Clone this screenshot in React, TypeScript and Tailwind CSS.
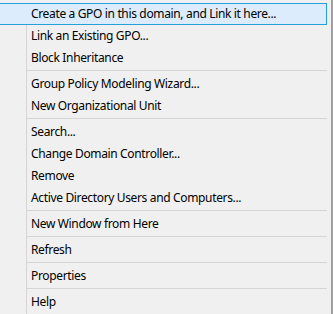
import React from "react";

type Entry = { label: string; active?: boolean } | "sep";

const entries: Entry[] = [
  { label: "Create a GPO in this domain, and Link it here...", active: true },
  { label: "Link an Existing GPO..." },
  { label: "Block Inheritance" },
  "sep",
  { label: "Group Policy Modeling Wizard..." },
  { label: "New Organizational Unit" },
  "sep",
  { label: "Search..." },
  { label: "Change Domain Controller..." },
  { label: "Remove" },
  { label: "Active Directory Users and Computers..." },
  "sep",
  { label: "New Window from Here" },
  "sep",
  { label: "Refresh" },
  "sep",
  { label: "Properties" },
  "sep",
  { label: "Help" },
];

export default function App() {
  return (
    <div className="w-[333px] h-[314px] overflow-hidden bg-[#f0f0f0] flex font-['Noto_Sans','Liberation_Sans',sans-serif] text-[12px] tracking-[-0.35px] text-black">
      <div className="w-[327px] pt-[3px] flex flex-col">
        {entries.map((e, i) =>
          e === "sep" ? (
            <div key={i} className="flex h-[4px] shrink-0">
              <div className="w-[26px]" />
              <div className="flex-1 border-l border-[#d5d5d5] pt-[1px]">
                <div className="h-px bg-[#d5d5d5]" />
              </div>
            </div>
          ) : e.active ? (
            <div
              key={i}
              className="flex h-[22px] shrink-0 items-center border-y border-r border-[#26a0da] bg-[#dcecfc]"
            >
              <span className="pl-[31px] leading-none">{e.label}</span>
            </div>
          ) : (
            <div key={i} className="flex h-[22px] shrink-0">
              <div className="w-[26px]" />
              <div className="flex-1 flex items-center border-l border-[#d5d5d5] pl-[4px]">
                <span className="leading-none">{e.label}</span>
              </div>
            </div>
          )
        )}
        <div className="flex flex-1">
          <div className="w-[26px]" />
          <div className="flex-1 border-l border-[#d5d5d5]" />
        </div>
      </div>
      <div className="flex-1" />
      <div className="w-[2px] bg-[#a0a0a0]" />
    </div>
  );
}
